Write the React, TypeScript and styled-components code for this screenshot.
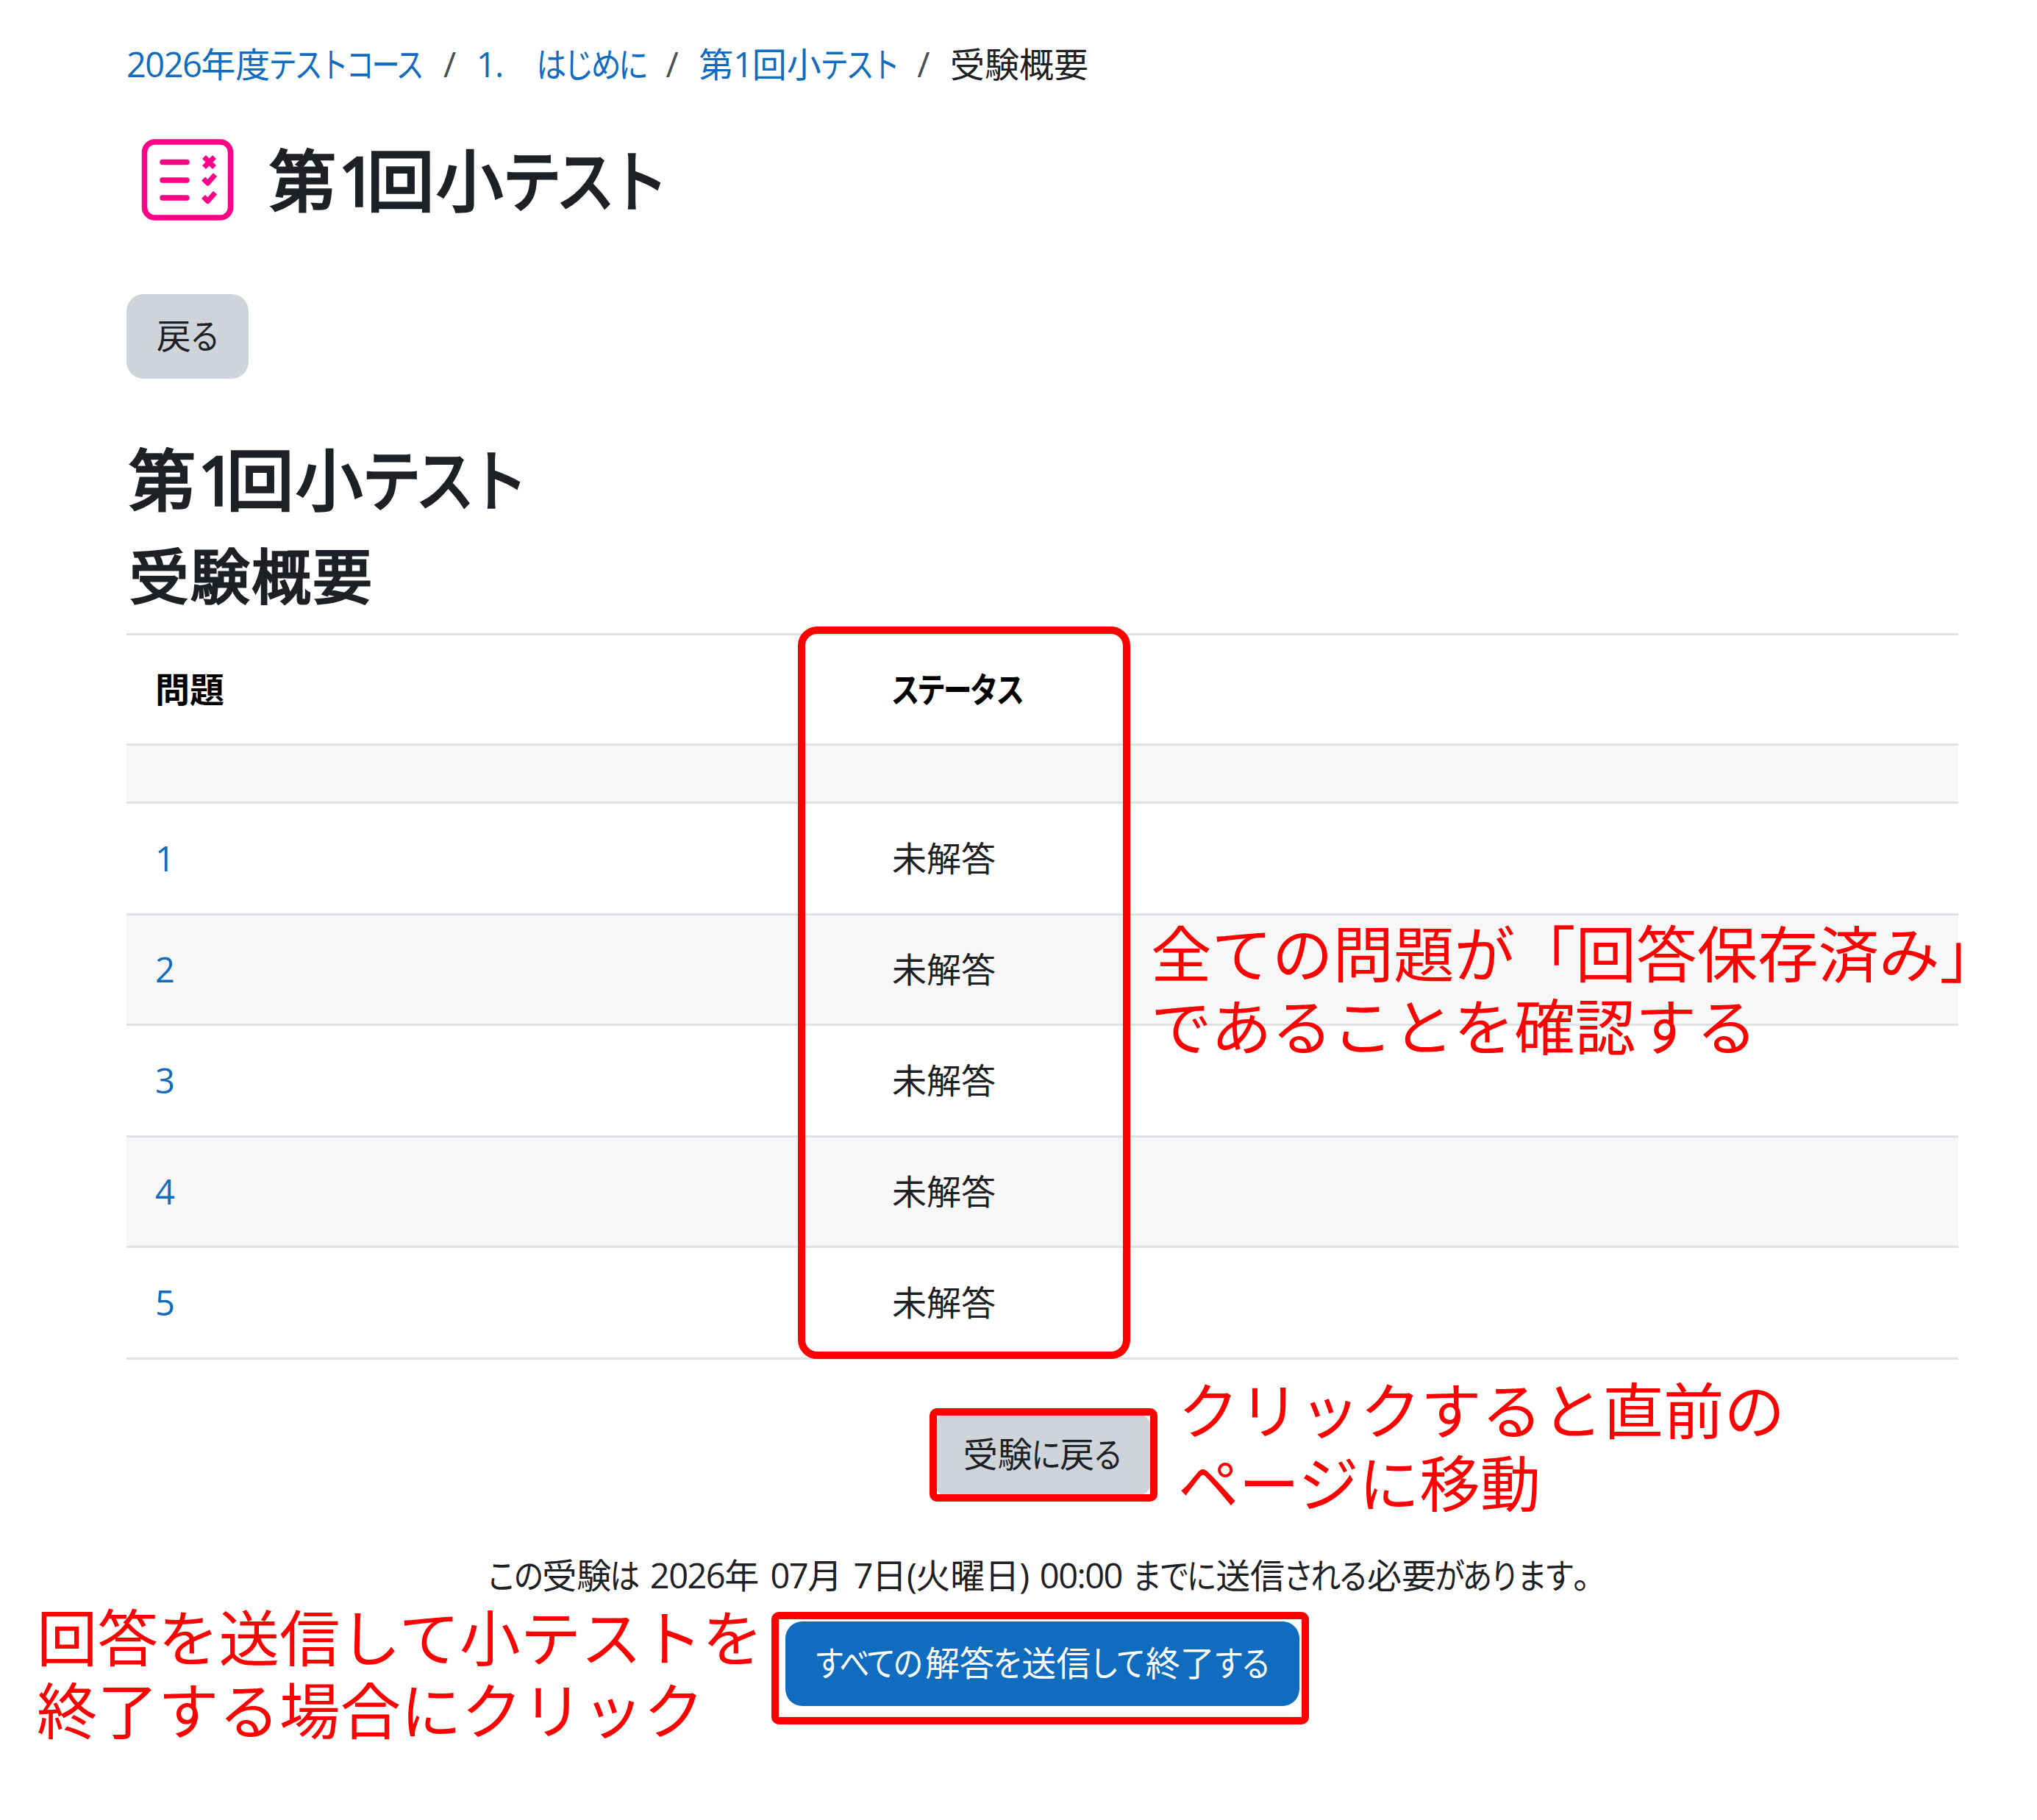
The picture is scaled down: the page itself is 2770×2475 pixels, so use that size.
import styled, { createGlobalStyle } from "styled-components";

type Question = {
  no: number;
  status: string;
};

type TextProps = {
  text: string;
  kata?: number;
  digit?: number;
};

const questions: Question[] = [
  { no: 1, status: "未解答" },
  { no: 2, status: "未解答" },
  { no: 3, status: "未解答" },
  { no: 4, status: "未解答" },
  { no: 5, status: "未解答" },
];

const crumbs = ["2026年度テストコース", "1.　はじめに", "第1回小テスト"];

// CSS
const GlobalStyle = createGlobalStyle`
  * {
    box-sizing: border-box;
  }
  body {
    margin: 0;
    background-color: #fff;
    color: #1d2125;
    font-family: "Open Sans", "Noto Sans CJK JP", sans-serif;
    font-size: 47px;
  }
`;
const Page = styled.div`
  position: relative;
  width: 2770px;
  height: 2475px;
  overflow: hidden;
  padding: 53px 107px 0 172px;
`;

// narrow kana, as in a UI gothic face
const Kana = styled.span<{ $count: number; $pitch: number; $scale: number }>`
  display: inline-block;
  width: ${(props) => props.$count * props.$pitch}em;
  letter-spacing: ${(props) => props.$pitch / props.$scale - 1}em;
  text-indent: ${(props) => (props.$pitch / props.$scale - 1) / 2}em;
  transform: scaleX(${(props) => props.$scale});
  transform-origin: 0 50%;
  white-space: nowrap;
`;
const Latin = styled.span<{ $spacing: number }>`
  letter-spacing: ${(props) => props.$spacing}em;
  word-spacing: 0.1em;
  white-space: pre;
`;

const Breadcrumb = styled.nav`
  display: flex;
  height: 70px;
  line-height: 68px;
  white-space: nowrap;
`;
const Crumbs = styled.div`
  display: flex;
`;
const Crumb = styled.a`
  color: #0f6cbf;
`;
const Slash = styled.span`
  width: 70.4px;
  padding-right: 2px;
  text-align: center;
  color: #4a4f55;
`;
const TitleRow = styled.header`
  display: flex;
  gap: 46px;
  margin-top: 66px;
  padding-left: 20px;
`;
const QuizIcon = styled.svg`
  width: 126px;
  height: 111px;
  fill: none;
  stroke: #ff0088;
`;
const Title = styled.h1`
  margin: 1px 0 0 2px;
  height: 105px;
  line-height: 111px;
  font-size: 91px;
  font-weight: 400;
  letter-spacing: 3px;
  -webkit-text-stroke: 3.4px currentColor;
  white-space: nowrap;
`;
const Button = styled.button<{ $primary?: boolean; $width: number }>`
  display: block;
  width: ${(props) => props.$width}px;
  height: 115px;
  padding: 0 0 2px;
  border: 0;
  border-radius: 23px;
  background-color: ${(props) => (props.$primary ? "#0f6cbf" : "#ced4da")};
  color: ${(props) => (props.$primary ? "#fff" : "#1d2125")};
  font: inherit;
  line-height: 113px;
  white-space: nowrap;
`;
const BackArea = styled.div`
  margin-top: 100px;
`;
const Heading = styled.h2`
  margin: 83px 0 0 3px;
  height: 110px;
  line-height: 109px;
  font-size: 91px;
  font-weight: 400;
  letter-spacing: 3px;
  -webkit-text-stroke: 3.4px currentColor;
`;
const SubHeading = styled.h3`
  margin: 27px 0 26px 4px;
  height: 100px;
  line-height: 97px;
  font-size: 80.5px;
  font-weight: 400;
  letter-spacing: 2.6px;
  -webkit-text-stroke: 3px currentColor;
`;
const Table = styled.div`
  border-bottom: 3px solid #dee2e6;
`;
const Row = styled.div<{ $height: number; $striped?: boolean; $head?: boolean }>`
  display: grid;
  grid-template-columns: 1002px 1fr;
  align-items: center;
  height: ${(props) => props.$height}px;
  border-top: 3px solid #dee2e6;
  background-color: ${(props) => (props.$striped ? "#f7f7f7" : "#fff")};
  color: ${(props) => (props.$head ? "#000" : "#1d2125")};
  font-weight: ${(props) => (props.$head ? 700 : 400)};
`;
const Cell = styled.div`
  padding: 0 0 1px 39px;
  line-height: 70px;
`;
const Actions = styled.div`
  display: flex;
  flex-direction: column;
  align-items: center;
  margin-top: 72px;
`;
const Deadline = styled.p`
  margin: 72px 0 27px;
  padding-left: 14px;
  height: 70px;
  line-height: 69px;
  white-space: nowrap;
`;

// red marks laid over the page
const Frame = styled.div<{ $x: number; $y: number; $w: number; $h: number; $r: number }>`
  position: absolute;
  left: ${(props) => props.$x}px;
  top: ${(props) => props.$y}px;
  width: ${(props) => props.$w}px;
  height: ${(props) => props.$h}px;
  border: 10px solid #ff0000;
  border-radius: ${(props) => props.$r}px;
`;
const Note = styled.p<{ $x: number; $y: number }>`
  position: absolute;
  left: ${(props) => props.$x}px;
  top: ${(props) => props.$y}px;
  margin: 0;
  color: #ff0000;
  font-family: "Noto Sans CJK JP", sans-serif;
  font-size: 82.5px;
  line-height: 98.8px;
  white-space: nowrap;
`;

function Text({ text, kata = 0.745, digit = -0.033 }: TextProps) {
  const runs = text.split(/([\u3041-\u309f]+|[\u30a1-\u30ff]+|[\x20-\x7e]+)/);
  return (
    <>
      {runs.map((run, i) => {
        if (/^[\u3041-\u309f]/.test(run)) {
          return (
            <Kana key={i} $count={run.length} $pitch={0.793} $scale={0.87}>
              {run}
            </Kana>
          );
        }
        if (/^[\u30a1-\u30ff]/.test(run)) {
          return (
            <Kana key={i} $count={run.length} $pitch={kata} $scale={kata * 1.09}>
              {run}
            </Kana>
          );
        }
        if (/^[\x20-\x7e]/.test(run)) {
          return (
            <Latin key={i} $spacing={digit}>
              {run}
            </Latin>
          );
        }
        return run;
      })}
    </>
  );
}

function App() {
  return (
    <Page>
      <GlobalStyle />
      <Breadcrumb>
        {crumbs.map((crumb) => (
          <Crumbs key={crumb}>
            <Crumb>
              <Text text={crumb} />
            </Crumb>
            <Slash>/</Slash>
          </Crumbs>
        ))}
        <span>受験概要</span>
      </Breadcrumb>

      <TitleRow>
        <QuizIcon viewBox="0 0 126 111">
          <rect x="4.5" y="4" width="117" height="103" rx="14" strokeWidth="7.5" />
          <g strokeWidth="7.5" strokeLinecap="round">
            <path d="M29 31.5h33M29 56h33M29 80h33" />
          </g>
          <g strokeWidth="7" strokeLinejoin="round">
            <path d="M85.500 24.500l14 14M99.500 24.500l-14 14" />
            <path d="M84.500 54l6 6l10 -11.500" />
            <path d="M84.500 78.500l6 6l10 -11.500" />
          </g>
        </QuizIcon>
        <Title>
          <Text text="第1回小テスト" kata={0.8} digit={-0.14} />
        </Title>
      </TitleRow>

      <BackArea>
        <Button $width={166}>
          <Text text="戻る" />
        </Button>
      </BackArea>

      <Heading>
        <Text text="第1回小テスト" kata={0.8} digit={-0.14} />
      </Heading>
      <SubHeading>受験概要</SubHeading>

      <Table>
        <Row $height={150} $head>
          <Cell>問題</Cell>
          <Cell>
            <Text text="ステータス" kata={0.76} />
          </Cell>
        </Row>
        <Row $height={79} $striped />
        {questions.map(({ no, status }) => (
          <Row key={no} $height={no % 2 ? 152 : 150} $striped={no % 2 === 0}>
            <Cell>
              <Crumb>{no}</Crumb>
            </Cell>
            <Cell>{status}</Cell>
          </Row>
        ))}
      </Table>

      <Actions>
        <Button $width={297}>
          <Text text="受験に戻る" />
        </Button>
        <Deadline>
          <Text text="この受験は 2026年 07月 7日(火曜日) 00:00 までに送信される必要があります。" />
        </Deadline>
        <Button $primary $width={699}>
          <Text text="すべての解答を送信して終了する" />
        </Button>
      </Actions>

      <Frame $x={1085} $y={852} $w={452} $h={996} $r={26} />
      <Frame $x={1264} $y={1915} $w={310} $h={127} $r={10} />
      <Frame $x={1049} $y={2192} $w={731} $h={153} $r={10} />
      <Note $x={1565} $y={1244}>
        全ての問題が「回答保存済み」
        <br />
        であることを確認する
      </Note>
      <Note $x={1602} $y={1865}>
        クリックすると直前の
        <br />
        ページに移動
      </Note>
      <Note $x={50} $y={2174}>
        回答を送信して小テストを
        <br />
        終了する場合にクリック
      </Note>
    </Page>
  );
}
export default App;
